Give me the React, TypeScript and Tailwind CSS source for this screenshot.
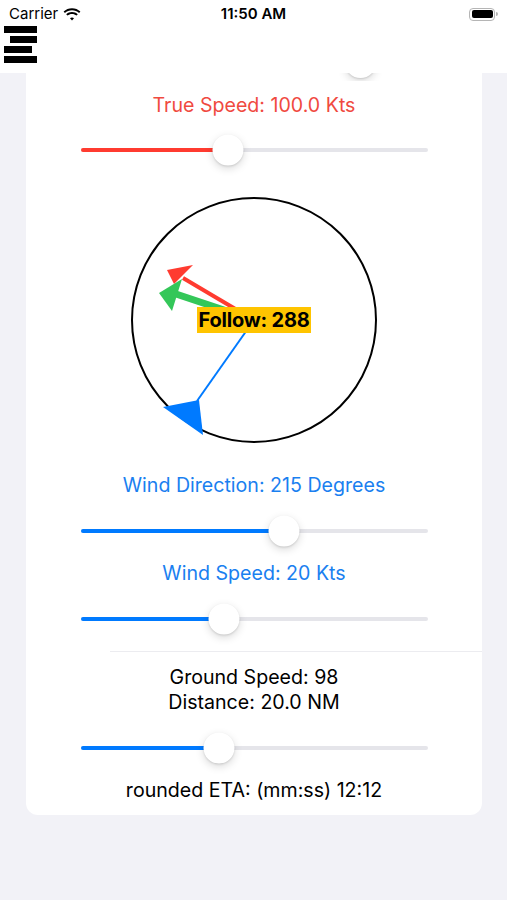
import React from "react";

const font = { fontFamily: "Inter, 'Liberation Sans', sans-serif" };

function Thumb({ x }: { x: number }) {
  return (
    <div
      className="absolute top-1/2 h-[31px] w-[31px] -translate-x-1/2 -translate-y-1/2 rounded-full bg-white shadow-[0_3px_8px_rgba(0,0,0,0.15),0_1px_2px_rgba(0,0,0,0.12)]"
      style={{ left: x }}
    />
  );
}

function Slider({ value, color }: { value: number; color: string }) {
  return (
    <div className="relative mx-auto flex h-8 w-[347px] items-center">
      <div className="h-1 w-full rounded-full bg-[#e5e5ea]">
        <div className="h-1 rounded-full" style={{ width: value, background: color }} />
      </div>
      <Thumb x={value} />
    </div>
  );
}

function Wifi() {
  return (
    <svg width="18" height="13" viewBox="0 0 18 13">
      <path d="M9 2.2c2.7 0 5.2 1 7.1 2.8l1.3-1.4C15.1 1.4 12.2 0.2 9 0.2S2.9 1.4 0.6 3.6l1.3 1.4C3.8 3.2 6.3 2.2 9 2.2z" fill="#000" />
      <path d="M9 5.9c1.7 0 3.2 0.6 4.5 1.7l1.3-1.4C13.2 4.7 11.2 3.9 9 3.9S4.8 4.7 3.2 6.2l1.3 1.4C5.8 6.5 7.3 5.9 9 5.9z" fill="#000" />
      <path d="M9 9.5c0.8 0 1.4 0.3 2 0.7L9 12.5 7 10.2C7.6 9.8 8.2 9.5 9 9.5z" fill="#000" />
    </svg>
  );
}

function Battery() {
  return (
    <div className="flex items-center">
      <div className="flex h-[13px] w-[26px] items-center rounded-[4px] border border-[#b5b5b5] p-[1.5px]">
        <div className="h-full w-full rounded-[2px] bg-black" />
      </div>
      <div className="ml-[1px] h-[4px] w-[1.5px] rounded-r bg-[#b5b5b5]" />
    </div>
  );
}

function Compass() {
  return (
    <div className="relative mx-auto h-[248px] w-[248px]">
      <svg width="248" height="248" viewBox="0 0 248 248">
        <circle cx="124" cy="124" r="122" fill="none" stroke="#000" strokeWidth="2" />
        <line x1="124" y1="124" x2="53" y2="82" stroke="#ff3b30" strokeWidth="4" />
        <polygon points="37,74 63,69 44,88" fill="#ff3b30" />
        <line x1="124" y1="124" x2="40" y2="96" stroke="#34c759" strokeWidth="7" />
        <polygon points="29,97 52,83 42,115" fill="#34c759" />
        <line x1="124" y1="124" x2="67" y2="205" stroke="#007aff" strokeWidth="2" />
        <polygon points="33,211 69,204 73,239" fill="#007aff" />
      </svg>
      <div className="absolute left-1/2 top-1/2 flex h-[26px] w-[114px] -translate-x-1/2 -translate-y-1/2 items-center justify-center bg-[#ffc400] text-[20px] font-bold tracking-[-0.2px] text-black">
        Follow: 288
      </div>
    </div>
  );
}

export default function App() {
  return (
    <div className="min-h-[900px] w-[507px] bg-[#f2f2f7]" style={font}>
      <div className="relative z-10 h-[73px] bg-white">
        <div className="flex h-[25px] items-center justify-between px-[9px] pt-[3px]">
          <div className="flex w-[120px] items-center gap-[5px] text-[15px] text-black">
            Carrier
            <Wifi />
          </div>
          <div className="text-[15px] font-semibold text-black">11:50 AM</div>
          <div className="flex w-[120px] justify-end">
            <Battery />
          </div>
        </div>
        <div className="mt-[1px] flex w-[34px] flex-col gap-[3px] pl-[4px]">
          <div className="h-[7px] w-[33px] bg-black" />
          <div className="ml-[6px] h-[7px] w-[27px] bg-black" />
          <div className="h-[7px] w-[28px] bg-black" />
          <div className="h-[7px] w-[33px] bg-black" />
        </div>
      </div>

      <div className="mx-[26px] w-[456px] rounded-b-[12px] bg-white pb-[13px] text-center text-[19.6px] leading-[24px]">
        <div className="relative h-[8px] overflow-hidden">
          <div className="absolute left-[319px] top-[-26px] h-[31px] w-[31px] rounded-full bg-white shadow-[0_3px_8px_rgba(0,0,0,0.15),0_1px_2px_rgba(0,0,0,0.12)]" />
        </div>
        <div className="mt-[12px] text-[#f04a3f]">True Speed: 100.0 Kts</div>
        <div className="mt-[17px]">
          <Slider value={147} color="#ff3b30" />
        </div>
        <div className="mt-[30px]">
          <Compass />
        </div>
        <div className="mt-[29px] text-[#1a80f0]">Wind Direction: 215 Degrees</div>
        <div className="mt-[18px]">
          <Slider value={203} color="#007aff" />
        </div>
        <div className="mt-[14px] text-[#1a80f0]">Wind Speed: 20 Kts</div>
        <div className="mt-[18px]">
          <Slider value={143} color="#007aff" />
        </div>
        <div className="ml-[84px] mt-[16px] h-px bg-[#ececf0]" />
        <div className="mt-[13px] leading-[25px] text-black">
          <div>Ground Speed: 98</div>
          <div>Distance: 20.0 NM</div>
        </div>
        <div className="mt-[17px]">
          <Slider value={138} color="#007aff" />
        </div>
        <div className="mt-[14px] text-black">rounded ETA: (mm:ss) 12:12</div>
      </div>
    </div>
  );
}
